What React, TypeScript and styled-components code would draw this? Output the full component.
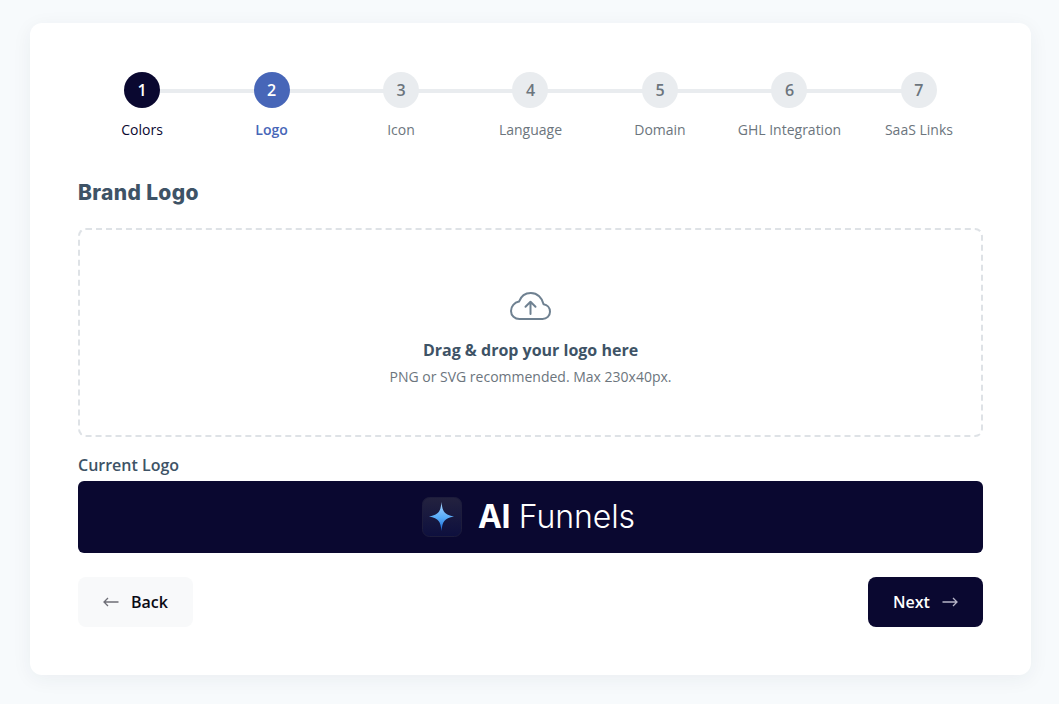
import { createGlobalStyle, styled } from "styled-components";

const GlobalStyle = createGlobalStyle`
  html, body {
    margin: 0;
    padding: 0;
    background: #f7fafc;
    font-family: "Open Sans", "Liberation Sans", sans-serif;
  }
  * {
    box-sizing: border-box;
  }
`;

const Page = styled.div`
  height: 704px;
  overflow: hidden;
  padding: 23px 28px 29px 30px;
`;

const Card = styled.div`
  height: 652px;
  background: #fff;
  border-radius: 12px;
  box-shadow: 0 4px 20px rgba(40, 50, 70, 0.06);
  padding: 49px 48px 48px;
`;

const Stepper = styled.div`
  display: grid;
  grid-template-columns: repeat(7, 1fr);
  margin: 0 -0.7px;
`;

const Step = styled.div`
  position: relative;
  display: flex;
  flex-direction: column;
  align-items: center;

  &:not(:last-child)::after {
    content: "";
    position: absolute;
    top: 17px;
    left: 50%;
    width: 100%;
    height: 4px;
    background: #e9ecef;
  }
`;

type StepState = "done" | "active" | "todo";

const circleColors: Record<StepState, string> = {
  done: "#0a0830",
  active: "#4766b8",
  todo: "#e9ecef",
};

const labelColors: Record<StepState, string> = {
  done: "#0a0830",
  active: "#4766b8",
  todo: "#6c757d",
};

const Circle = styled.div<{ $state: StepState }>`
  position: relative;
  z-index: 1;
  width: 36px;
  height: 36px;
  border-radius: 50%;
  display: flex;
  align-items: center;
  justify-content: center;
  font-size: 16px;
  font-weight: 600;
  background: ${(p) => circleColors[p.$state]};
  color: ${(p) => (p.$state === "todo" ? "#6c757d" : "#fff")};
`;

const StepLabel = styled.div<{ $state: StepState }>`
  margin-top: 12px;
  font-size: 14px;
  line-height: 20px;
  font-weight: ${(p) => (p.$state === "active" ? 600 : 400)};
  color: ${(p) => labelColors[p.$state]};
`;

const Heading = styled.h2`
  margin: 41px 0 0;
  font-family: Inter, "Liberation Sans", sans-serif;
  font-size: 21px;
  line-height: 24px;
  font-weight: 800;
  letter-spacing: 0.35px;
  color: #3e5366;
`;

const DropZone = styled.div`
  margin-top: 23px;
  height: 209px;
  border: 2px dashed #dee2e6;
  border-radius: 8px;
  display: flex;
  flex-direction: column;
  align-items: center;
  padding-top: 62px;
`;

const DropTitle = styled.div`
  margin-top: 18px;
  font-size: 16px;
  line-height: 24px;
  font-weight: 700;
  color: #3e5366;
`;

const DropHint = styled.div`
  margin-top: 5px;
  font-size: 14px;
  line-height: 20px;
  color: #6c757d;
`;

const CurrentLabel = styled.div`
  margin: 16px 0 4px;
  font-size: 16px;
  line-height: 24px;
  font-weight: 600;
  color: #3e5366;
`;

const LogoBar = styled.div`
  height: 72px;
  border-radius: 6px;
  background: #0a0830;
  display: flex;
  align-items: center;
  justify-content: center;
  gap: 16px;
  padding-right: 4px;
`;

const LogoText = styled.div`
  font-family: Inter, "Liberation Sans", sans-serif;
  font-size: 32px;
  line-height: 40px;
  letter-spacing: -0.1px;
  font-weight: 300;
  color: #fff;

  b {
    font-weight: 700;
    letter-spacing: -0.5px;
  }
`;

const Actions = styled.div`
  margin-top: 24px;
  display: flex;
  justify-content: space-between;
`;

const Button = styled.button<{ $primary?: boolean }>`
  width: 115px;
  height: 50px;
  border: 0;
  border-radius: 8px;
  display: flex;
  align-items: center;
  justify-content: center;
  gap: 12px;
  font-family: inherit;
  font-size: 16px;
  font-weight: 600;
  background: ${(p) => (p.$primary ? "#0a0830" : "#f8f9fa")};
  color: ${(p) => (p.$primary ? "#fff" : "#0a0a14")};
`;

const ArrowIcon = styled.svg<{ $primary?: boolean }>`
  stroke: ${(p) => (p.$primary ? "#b6b4c6" : "#6e6e76")};
  fill: none;
  stroke-width: 1.3;
`;

const CloudUpload = () => (
  <svg width="41" height="28" viewBox="0 0 41 28" fill="none" stroke="#6f8191" strokeWidth="2" strokeLinecap="round" strokeLinejoin="round">
    <path d="M9.5 27H32.5C36.8 27 40 23.8 40 19.8C40 15.8 37.2 12.9 33.6 12.3C32.3 5.8 27.3 1 20.8 1C15.3 1 11 4.2 9 9.6C4.4 10.6 1 14.4 1 19C1 23.6 4.8 27 9.5 27Z" />
    <path d="M20.5 22V10M15.5 14.8L20.5 9.8L25.5 14.8" />
  </svg>
);

const Sparkle = () => (
  <svg width="40" height="40" viewBox="0 0 40 40">
    <defs>
      <linearGradient id="tile" x1="0" y1="0" x2="0" y2="1">
        <stop offset="0" stopColor="#23223f" />
        <stop offset="1" stopColor="#0d0f3e" />
      </linearGradient>
      <linearGradient id="star" x1="0" y1="0" x2="0" y2="1">
        <stop offset="0" stopColor="#a8d4ff" />
        <stop offset="0.55" stopColor="#55aaf8" />
        <stop offset="1" stopColor="#1560d0" />
      </linearGradient>
    </defs>
    <rect x="0.5" y="0.5" width="39" height="39" rx="7" fill="url(#tile)" stroke="#1d1c3c" />
    <path d="M19.5 5C20.5 14.5 22 17.5 32 19.5C22 21.5 20.5 24.5 19.5 34C18.5 24.5 17 21.5 7 19.5C17 17.5 18.5 14.5 19.5 5Z" fill="url(#star)" />
  </svg>
);

const steps = ["Colors", "Logo", "Icon", "Language", "Domain", "GHL Integration", "SaaS Links"];

const stateOf = (index: number): StepState => {
  if (index === 0) return "done";
  if (index === 1) return "active";
  return "todo";
};

export default function App() {
  return (
    <Page>
      <GlobalStyle />
      <Card>
        <Stepper>
          {steps.map((label, i) => (
            <Step key={label}>
              <Circle $state={stateOf(i)}>{i + 1}</Circle>
              <StepLabel $state={stateOf(i)}>{label}</StepLabel>
            </Step>
          ))}
        </Stepper>

        <Heading>Brand Logo</Heading>

        <DropZone>
          <CloudUpload />
          <DropTitle>Drag &amp; drop your logo here</DropTitle>
          <DropHint>PNG or SVG recommended. Max 230x40px.</DropHint>
        </DropZone>

        <CurrentLabel>Current Logo</CurrentLabel>
        <LogoBar>
          <Sparkle />
          <LogoText>
            <b>AI</b> Funnels
          </LogoText>
        </LogoBar>

        <Actions>
          <Button>
            <ArrowIcon width="16" height="10" viewBox="0 0 16 10">
              <path d="M15.5 5H1M5 1L1 5L5 9" />
            </ArrowIcon>
            Back
          </Button>
          <Button $primary>
            Next
            <ArrowIcon $primary width="16" height="10" viewBox="0 0 16 10">
              <path d="M0.5 5H15M11 1L15 5L11 9" />
            </ArrowIcon>
          </Button>
        </Actions>
      </Card>
    </Page>
  );
}
